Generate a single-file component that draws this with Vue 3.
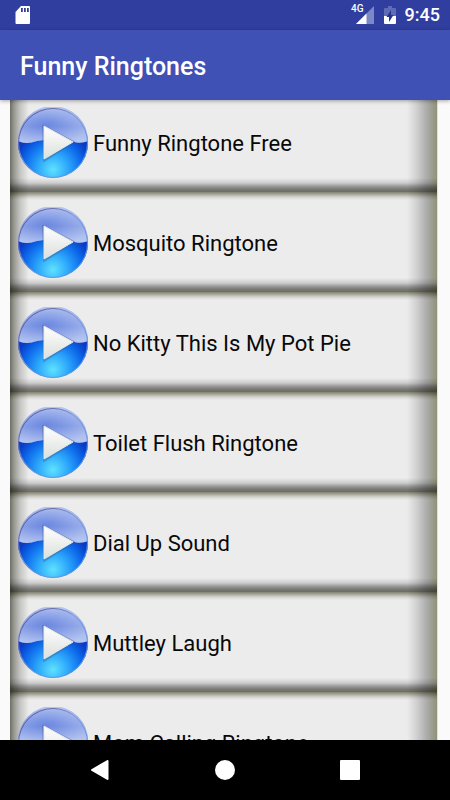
<script setup>
const ringtones = [
  'Funny Ringtone Free',
  'Mosquito Ringtone',
  'No Kitty This Is My Pot Pie',
  'Toilet Flush Ringtone',
  'Dial Up Sound',
  'Muttley Laugh',
  'Mom Calling Ringtone',
]
</script>

<template>
  <div class="screen">
    <div class="status">
      <svg class="sd" viewBox="0 0 16 20" width="16" height="20" aria-hidden="true">
        <path d="M6 1h8q1 0 1 1v16q0 1-1 1H1.500q-1 0-1-1V7z" fill="#fff" />
        <path d="M6 3h1.800v4H6zM9 3h1.800v4H9zM12 3h1.800v4H12z" fill="#303f9f" />
      </svg>
      <div class="indicators">
        <span class="network">4G</span>
        <svg class="signal" viewBox="0 0 18 18" width="18" height="18" aria-hidden="true">
          <path d="M18 0v18H0z" fill="#7c87c5" />
          <path d="M10.500 7.500V18H0z" fill="#fff" />
        </svg>
        <svg class="battery" viewBox="0 0 12 18" width="12" height="18" aria-hidden="true">
          <path d="M4 0h4v2h3q1 0 1 1v7H0V3q0-1 1-1h3z" fill="#5f6bb5" />
          <path d="M0 10h12v7q0 1-1 1H1q-1 0-1-1z" fill="#fff" />
          <path d="M7 4v5h2.500L5 16v-5H2.500z" fill="#26348f" />
        </svg>
        <time class="clock">9:45</time>
      </div>
    </div>
    <header class="bar">
      <h1>Funny Ringtones</h1>
    </header>
    <main class="content">
      <svg class="defs" width="0" height="0" aria-hidden="true">
        <defs>
          <linearGradient id="gloss" x1="0" y1="0" x2="0" y2="1">
            <stop offset="0" stop-color="#c6d2f4" />
            <stop offset=".15" stop-color="#a3b6ec" />
            <stop offset=".55" stop-color="#8099e2" />
            <stop offset="1" stop-color="#b0c1f0" />
          </linearGradient>
          <radialGradient id="glossSide" cx=".4" cy=".5" r=".6">
            <stop offset="0" stop-color="#4669dc" stop-opacity=".4" />
            <stop offset="1" stop-color="#c9d5f5" stop-opacity=".4" />
          </radialGradient>
          <radialGradient id="pool" cx=".5" cy=".88" r=".56">
            <stop offset="0" stop-color="#5fe2ff" />
            <stop offset=".4" stop-color="#2ba6fb" />
            <stop offset=".75" stop-color="#0d68ea" />
            <stop offset="1" stop-color="#083cc6" />
          </radialGradient>
          <linearGradient id="rim" x1="0" y1="0" x2="1" y2="1">
            <stop offset="0" stop-color="#4c3f78" />
            <stop offset=".45" stop-color="#7f93d6" />
            <stop offset="1" stop-color="#4c96ea" />
          </linearGradient>
          <linearGradient id="arrow" x1="0" y1="0" x2="0" y2="1">
            <stop offset="0" stop-color="#fff" />
            <stop offset="1" stop-color="#dcdfdc" />
          </linearGradient>
        </defs>
      </svg>
      <ul class="list">
        <li v-for="name in ringtones" :key="name">
          <button class="row" type="button">
            <svg class="play" viewBox="0 0 72 72" width="72" height="72" aria-hidden="true">
              <circle cx="36" cy="36" r="35" fill="url(#pool)" />
              <path d="M1 34A35 35 0 0 1 71 34Q64 37 57 35Q50 31 40 32Q30 32 20 34Q9 38 1 34z" fill="url(#gloss)" />
              <path d="M1 34A35 35 0 0 1 71 34Q64 37 57 35Q50 31 40 32Q30 32 20 34Q9 38 1 34z" fill="url(#glossSide)" />
              <circle cx="36" cy="36" r="34.500" fill="none" stroke="url(#rim)" />
              <path d="M26 19L57 35L27 54z" fill="#3c5684" opacity=".35" stroke="#3c5684" stroke-width="2" stroke-linejoin="round" />
              <path d="M27 19L56 35L27 52z" fill="url(#arrow)" stroke="#e4e7ec" stroke-linejoin="round" />
            </svg>
            <span>{{ name }}</span>
          </button>
        </li>
      </ul>
    </main>
    <nav class="nav">
      <button type="button" aria-label="Back">
        <svg viewBox="0 0 20 20" width="20" height="20"><path d="M17.500 1v18L2 10z" fill="#fff" stroke="#fff" stroke-width="2" stroke-linejoin="round" /></svg>
      </button>
      <button type="button" aria-label="Home">
        <svg viewBox="0 0 20 20" width="20" height="20"><circle cx="10" cy="10" r="10" fill="#fff" /></svg>
      </button>
      <button type="button" aria-label="Recent apps">
        <svg viewBox="0 0 20 20" width="20" height="20"><rect width="20" height="20" rx="1" fill="#fff" /></svg>
      </button>
    </nav>
  </div>
</template>

<style>
body {
  margin: 0;
}
</style>

<style scoped>
.screen {
  display: flex;
  flex-direction: column;
  height: 100vh;
  overflow: hidden;
  background: #fafafa;
  font-family: Roboto, sans-serif;
}
.status {
  flex: none;
  display: flex;
  align-items: center;
  justify-content: space-between;
  height: 30px;
  padding: 0 10px 0 15px;
  background: #303f9f;
  color: #fff;
}
.indicators {
  display: flex;
  align-items: center;
}
.network {
  align-self: flex-start;
  padding-top: 4px;
  font-size: 10px;
  font-weight: 500;
  line-height: 12px;
}
.signal {
  margin-left: -8px;
}
.network,
.signal,
.battery {
  flex: none;
}
.battery {
  margin: 0 9px 0 10px;
}
.clock {
  font-size: 18px;
  font-weight: 500;
  line-height: 32px;
}
.bar {
  flex: none;
  position: relative;
  display: flex;
  align-items: center;
  height: 70px;
  padding: 2px 20px 0;
  box-sizing: border-box;
  background: #3f51b5;
  color: #fff;
  box-shadow: 0 1px 4px rgba(0, 0, 0, 0.35);
}
h1 {
  margin: 0;
  font-size: 25px;
  font-weight: 500;
}
.content {
  flex: 1;
  min-height: 0;
  overflow: hidden;
}
.defs {
  display: block;
}
.list {
  margin: -8px 12px 0 10px;
  padding: 0;
  list-style: none;
}
.row {
  display: flex;
  align-items: center;
  gap: 4px;
  width: 100%;
  height: 100px;
  padding: 2px 7px 0;
  border: 0;
  border-right: 1px solid #e2e8ae;
  background:
    linear-gradient(to right, #77786c, #a4a49e 4px, #d4d4d2 10px, #fff 19px),
    linear-gradient(to left, #9c9e82, #a9aa9b 5px, #bcbcbd 11px, #e0e0e0 20px, #fff 30px),
    linear-gradient(to top, #74756a, #85857f 3px, #aaaaac 6px, #dcdcdc 9px, #fff 14px),
    linear-gradient(to bottom, #8c8d78, #b0b1a3 2px, #e4e4e0 5px, #fff 8px),
    #ececec;
  background-blend-mode: multiply;
  color: #080808;
  font-family: inherit;
  font-size: 22px;
  text-align: left;
}
.play {
  flex: none;
}
.nav {
  flex: none;
  display: flex;
  justify-content: center;
  gap: 77px;
  height: 60px;
  background: #000;
}
.nav button {
  display: flex;
  align-items: center;
  justify-content: center;
  width: 48px;
  padding: 0;
  border: 0;
  background: none;
}
</style>
